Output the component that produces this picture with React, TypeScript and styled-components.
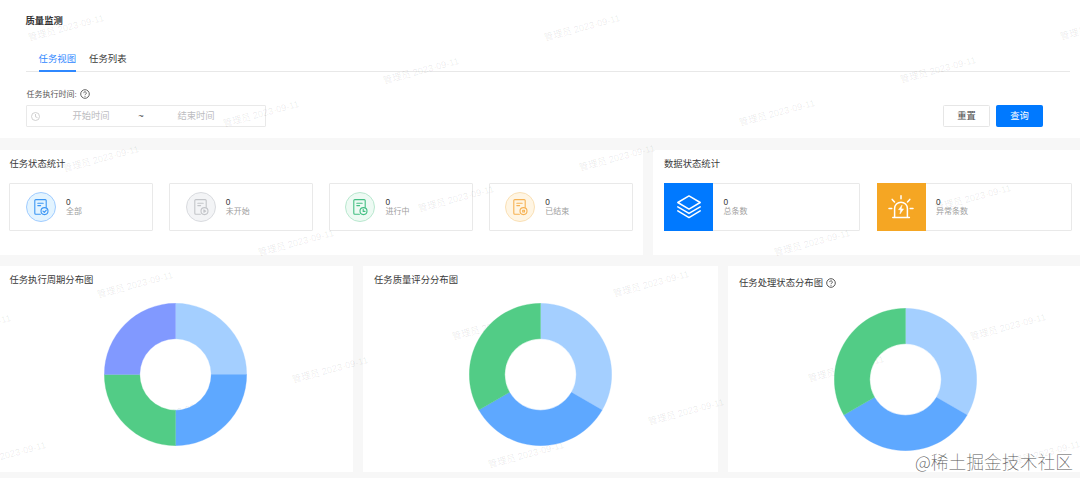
import React from 'react';
import styled, { createGlobalStyle } from 'styled-components';

const GlobalStyle = createGlobalStyle`
  * { box-sizing: border-box; }
  body {
    margin: 0;
    background: #f7f7f7;
    font-family: "Liberation Sans", "Noto Sans CJK SC", sans-serif;
    color: #3a3a3a;
    overflow: hidden;
  }
`;

const Page = styled.div`
  position: relative;
  width: 1080px;
  height: 478px;
  overflow: hidden;
  display: flex;
  flex-direction: column;
`;

const Header = styled.header`
  height: 138px;
  background: #fff;
  padding: 14px 10px 0 26px;
  flex: none;
`;

const PageTitle = styled.h1`
  margin: 0 0 0 -0.5px;
  font-size: 9.33px;
  line-height: 14px;
  font-weight: 700;
  color: #333;
`;

const Tabs = styled.nav`
  display: flex;
  gap: 13px;
  height: 28px;
  margin-top: 16px;
  padding-left: 12.5px;
  border-bottom: 1px solid #e8e8e8;
`;

const Tab = styled.div<{ $active?: boolean }>`
  height: 28px;
  padding-top: 8px;
  font-size: 9.4px;
  line-height: 14px;
  color: ${p => (p.$active ? '#2f88ff' : '#3a3a3a')};
  border-bottom: 2px solid ${p => (p.$active ? '#2f88ff' : 'transparent')};
`;

const FilterLabel = styled.div`
  display: flex;
  align-items: center;
  gap: 3px;
  margin-top: 15px;
  height: 13px;
  padding-left: 0.5px;
  font-size: 8px;
  color: #555;
`;

const FilterRow = styled.div`
  display: flex;
  align-items: center;
  justify-content: space-between;
  height: 22px;
  margin-top: 5px;
  padding-right: 27px;
`;

const RangeInput = styled.div`
  display: grid;
  grid-template-columns: 18px 92px 8px 102px 1fr;
  align-items: center;
  width: 240px;
  height: 22px;
  border: 1px solid #e9e9e9;
  border-radius: 1px;
  font-size: 9.3px;
  line-height: 14px;
  color: #bdbdc1;
  text-align: center;
  svg { margin-left: 4px; }
`;

const Tilde = styled.span`
  color: #444;
`;

const Buttons = styled.div`
  display: flex;
  gap: 6px;
`;

const Button = styled.button<{ $primary?: boolean }>`
  width: 47px;
  height: 22px;
  padding: 0;
  border: 1px solid ${p => (p.$primary ? '#0079ff' : '#e6e6e6')};
  border-radius: 1.5px;
  background: ${p => (p.$primary ? '#0079ff' : '#fff')};
  color: ${p => (p.$primary ? '#fff' : '#4a4a4a')};
  font-family: inherit;
  font-size: 9.3px;
  line-height: 14px;
`;

const StatsRow = styled.div`
  display: grid;
  grid-template-columns: 643px 1fr;
  gap: 10px;
  height: 105px;
  margin-top: 12px;
`;

const ChartsRow = styled.div`
  display: grid;
  grid-template-columns: 353px 355px 1fr;
  gap: 10px;
  height: 206px;
  margin-top: 11px;
`;

const Panel = styled.section<{ $left?: number; $right?: number; $top?: number }>`
  background: #fff;
  padding: ${p => p.$top ?? 7}px ${p => p.$right ?? 10.5}px 0 ${p => p.$left ?? 9.4}px;
`;

const PanelTitle = styled.h2<{ $gap: number }>`
  display: flex;
  align-items: center;
  gap: 3px;
  height: 14px;
  margin: 0 0 ${p => p.$gap}px;
  font-size: 9.33px;
  line-height: 14px;
  font-weight: 400;
  color: #3a3a3a;
`;

const Cards = styled.div<{ $count: number; $gap: number }>`
  display: grid;
  grid-template-columns: repeat(${p => p.$count}, 1fr);
  gap: ${p => p.$gap}px;
`;

const Card = styled.div<{ $tile?: boolean }>`
  display: flex;
  align-items: center;
  height: 48px;
  gap: ${p => (p.$tile ? 10.5 : 10)}px;
  padding-left: ${p => (p.$tile ? 0 : 15.5)}px;
  border: 1px solid #e9e9e9;
  border-radius: 1px;
`;

const RoundIcon = styled.div<{ $bg: string; $line: string }>`
  display: grid;
  place-items: center;
  width: 30px;
  height: 30px;
  border: 1px solid ${p => p.$line};
  border-radius: 50%;
  background: ${p => p.$bg};
`;

const TileIcon = styled.div<{ $bg: string }>`
  display: grid;
  place-items: center;
  width: 49px;
  height: 48px;
  margin: -1px 0 -1px -1px;
  background: ${p => p.$bg};
`;

const Stat = styled.div`
  padding-bottom: 1px;
  font-size: 8px;
  line-height: 9px;
  color: #a0a0a0;
`;

const StatValue = styled.div`
  font-size: 8.3px;
  color: #333;
`;

const ChartBox = styled.div<{ $offset: number }>`
  position: relative;
  z-index: 1;
  padding-left: ${p => p.$offset}px;
  svg { display: block; }
`;

const StampLayer = styled.div`
  position: absolute;
  inset: 0;
  pointer-events: none;
`;

const Stamp = styled.span`
  position: absolute;
  width: 80px;
  height: 14px;
  margin: -7px 0 0 -40px;
  font-size: 9.4px;
  line-height: 14px;
  text-align: center;
  white-space: nowrap;
  color: rgba(0, 0, 0, 0.085);
  transform: rotate(-15deg);
`;

const Credit = styled.div`
  position: absolute;
  z-index: 2;
  right: 7px;
  bottom: 4px;
  font-family: "Noto Sans CJK SC", sans-serif;
  font-size: 17.8px;
  line-height: 26px;
  font-weight: 100;
  color: #555;
  white-space: nowrap;
`;

const Help = ({ color }: { color: string }) => (
  <svg width="10" height="10" viewBox="0 0 10 10" fill="none" stroke={color} strokeWidth="0.9">
    <circle cx="5" cy="5" r="4.3" />
    <path d="M3.7 4.1a1.3 1.3 0 1 1 2 1.1c-.5.3-.7.5-.7 1M5 7v.8" />
  </svg>
);

const Clock = () => (
  <svg width="9" height="9" viewBox="0 0 9 9" fill="none" stroke="#c4c4c4" strokeWidth="0.8">
    <circle cx="4.5" cy="4.5" r="4" />
    <path d="M4.5 2v2.8l2 .8" />
  </svg>
);

type Mark = 'check' | 'play' | 'clock' | 'stop';
const marks: Record<Mark, React.ReactNode> = {
  check: <path d="M10 13.2l1.3 1.2 2-2.3" />,
  play: <path d="M10.9 11.9v2.4l1.8-1.2z" />,
  clock: <path d="M11.2 11.2v2.2h1.8" />,
  stop: <path d="M10.7 12.2h1.8v1.8h-1.8z" />,
};

const Doc = ({ color, mark }: { color: string; mark: Mark }) => (
  <svg width="16" height="18" viewBox="0 0 16 18" fill="none" stroke={color} strokeWidth="1.1" strokeLinecap="round" strokeLinejoin="round">
    <path d="M7.4 16.2H2.8a1 1 0 0 1-1-1V2.6a1 1 0 0 1 1-1h9.4a1 1 0 0 1 1 1v6.6M4.8 5.2h5.4M4.8 7.6h2.8" />
    <circle cx="11.5" cy="13.1" r="3.5" />
    {marks[mark]}
  </svg>
);

const Layers = () => (
  <svg width="26" height="26" viewBox="0 0 26 26" fill="none" stroke="#fff" strokeWidth="1.5" strokeLinejoin="round" strokeLinecap="round">
    <path d="M13 1.9l11.2 6.6L13 15.1 1.8 8.5zM1.8 12.8L13 19.4l11.2-6.6M1.8 16.8L13 23.6l11.2-6.8" />
  </svg>
);

const Alarm = () => (
  <svg width="26" height="26" viewBox="0 0 26 26" fill="none" stroke="#fff" strokeWidth="1.5" strokeLinecap="round" strokeLinejoin="round">
    <path d="M4.8 23.6h16.6M6.6 23.2v-8.6a6.4 6.4 0 0 1 12.8 0v8.6M13 1.8v3M4.2 5.4l2.3 2.6M21.8 5.4l-2.3 2.6M1 14.6h2.8M22.2 14.6H25" />
    <path d="M13.9 11.3l-3.4 4.4h2.2l-.7 4.2 3.6-5h-2.3z" fill="#fff" strokeWidth=".5" />
  </svg>
);

const point = (r: number, turn: number) => {
  const a = turn * Math.PI * 2;
  return `${(71.5 + r * Math.sin(a)).toFixed(2)} ${(71.5 - r * Math.cos(a)).toFixed(2)}`;
};

const Donut = ({ colors }: { colors: string[] }) => (
  <svg width="143" height="143" viewBox="0 0 143 143">
    {colors.map((c, i) => {
      const s = i / colors.length;
      const e = (i + 1) / colors.length;
      return (
        <path
          key={c}
          fill={c}
          stroke={c}
          strokeWidth="0.3"
          d={`M${point(71.2, s)}A71.2 71.2 0 0 1 ${point(71.2, e)}L${point(35.7, e)}A35.7 35.7 0 0 0 ${point(35.7, s)}Z`}
        />
      );
    })}
  </svg>
);

const SKY = '#a4cfff';
const BLUE = '#5ea8ff';
const GREEN = '#52cc86';
const VIOLET = '#8199ff';

const tasks: { label: string; bg: string; line: string; color: string; mark: Mark }[] = [
  { label: '全部', bg: '#e3f4ff', line: '#a0ccff', color: '#3c96f4', mark: 'check' },
  { label: '未开始', bg: '#f3f4f6', line: '#d9dbdf', color: '#c3c5c9', mark: 'play' },
  { label: '进行中', bg: '#edfaf3', line: '#b9e8cf', color: '#43bf83', mark: 'clock' },
  { label: '已结束', bg: '#fff5e3', line: '#fae0b5', color: '#f6b254', mark: 'stop' },
];

const stamps = [
  [66, 28], [582, 28], [1098, 27], [421, 71], [938, 70], [261, 114], [777, 113],
  [101, 159], [617, 158], [456, 199], [973, 198], [296, 243], [812, 243],
  [135, 285], [651, 284], [-27, 328], [490, 327], [1008, 327], [330, 370], [846, 369],
  [170, 414], [686, 412], [8, 455], [526, 455], [1042, 454],
];

export default function App() {
  return (
    <Page>
      <GlobalStyle />
      <Header>
        <PageTitle>质量监测</PageTitle>
        <Tabs>
          <Tab $active>任务视图</Tab>
          <Tab>任务列表</Tab>
        </Tabs>
        <FilterLabel>
          任务执行时间: <Help color="#555" />
        </FilterLabel>
        <FilterRow>
          <RangeInput>
            <Clock />
            <span>开始时间</span>
            <Tilde>~</Tilde>
            <span>结束时间</span>
          </RangeInput>
          <Buttons>
            <Button>重置</Button>
            <Button $primary>查询</Button>
          </Buttons>
        </FilterRow>
      </Header>
      <StatsRow>
        <Panel>
          <PanelTitle $gap={12}>任务状态统计</PanelTitle>
          <Cards $count={4} $gap={16}>
            {tasks.map(t => (
              <Card key={t.label}>
                <RoundIcon $bg={t.bg} $line={t.line}>
                  <Doc color={t.color} mark={t.mark} />
                </RoundIcon>
                <Stat>
                  <StatValue>0</StatValue>
                  {t.label}
                </Stat>
              </Card>
            ))}
          </Cards>
        </Panel>
        <Panel $left={11} $right={8}>
          <PanelTitle $gap={12}>数据状态统计</PanelTitle>
          <Cards $count={2} $gap={17}>
            <Card $tile>
              <TileIcon $bg="#0079ff"><Layers /></TileIcon>
              <Stat><StatValue>0</StatValue>总条数</Stat>
            </Card>
            <Card $tile>
              <TileIcon $bg="#f5a623"><Alarm /></TileIcon>
              <Stat><StatValue>0</StatValue>异常条数</Stat>
            </Card>
          </Cards>
        </Panel>
      </StatsRow>
      <ChartsRow>
        <Panel>
          <PanelTitle $gap={16}>任务执行周期分布图</PanelTitle>
          <ChartBox $offset={94.8}><Donut colors={[SKY, BLUE, GREEN, VIOLET]} /></ChartBox>
        </Panel>
        <Panel $left={11}>
          <PanelTitle $gap={16}>任务质量评分分布图</PanelTitle>
          <ChartBox $offset={95}><Donut colors={[SKY, BLUE, GREEN]} /></ChartBox>
        </Panel>
        <Panel $left={11} $top={10}>
          <PanelTitle $gap={18}>
            任务处理状态分布图 <Help color="#444" />
          </PanelTitle>
          <ChartBox $offset={95}><Donut colors={[SKY, BLUE, GREEN]} /></ChartBox>
        </Panel>
      </ChartsRow>
      <StampLayer>
        {stamps.map(([x, y]) => (
          <Stamp key={`${x},${y}`} style={{ left: x, top: y }}>管理员 2023-09-11</Stamp>
        ))}
      </StampLayer>
      <Credit>@稀土掘金技术社区</Credit>
    </Page>
  );
}
